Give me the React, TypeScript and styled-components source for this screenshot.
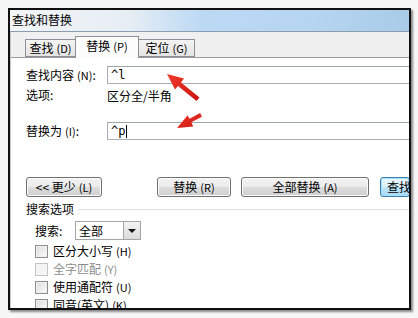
import React from "react";
import styled, { createGlobalStyle } from "styled-components";

const GlobalStyle = createGlobalStyle`
  html, body {
    margin: 0;
    padding: 0;
    background: #f7f7f7;
    font-family: "Noto Sans CJK SC", "Liberation Sans", sans-serif;
    font-size: 12px;
    color: #000;
  }
`;

const Page = styled.div`
  position: relative;
  width: 418px;
  height: 318px;
  overflow: hidden;
`;

const Dialog = styled.div`
  position: relative;
  margin: 8px 0 0 8px;
  width: 399px;
  height: 298px;
  border: 2px solid #111;
  box-shadow: 2px 2px 2px rgba(0, 0, 0, 0.45);
  background: #fff;
  overflow: hidden;
`;

const TitleBar = styled.div`
  box-sizing: border-box;
  height: 22px;
  padding: 0 0 2px 2px;
  display: flex;
  align-items: center;
  font-size: 12px;
  line-height: 14px;
  background: linear-gradient(to right, #f3f5f7 0%, #e6edf4 30%, #bcd9f4 48%, #b6d5f1 75%, #a9cbe8 100%);
  border-bottom: 1px solid #8b9db0;
`;

const Body = styled.div`
  border-left: 1px solid #c8c8c8;
  height: 100%;
`;

const TabStrip = styled.div`
  height: 26px;
  box-sizing: border-box;
  background: #f0f0f0;
  border-bottom: 1px solid #9a9a9a;
  display: flex;
  align-items: flex-end;
  padding-left: 14px;
`;

const Tab = styled.div<{ $active?: boolean; $w: number }>`
  box-sizing: border-box;
  width: ${(p) => p.$w}px;
  height: ${(p) => (p.$active ? 22 : 18)}px;
  margin-bottom: ${(p) => (p.$active ? -1 : 0)}px;
  margin-left: ${(p) => (p.$active ? -1 : 0)}px;
  margin-right: ${(p) => (p.$active ? -1 : 0)}px;
  border: 1px solid #8c8f96;
  border-bottom: ${(p) => (p.$active ? "none" : "1px solid #8c8f96")};
  background: ${(p) => (p.$active ? "#fcfcfc" : "linear-gradient(#f4f4f4, #e4e4e4)")};
  display: flex;
  align-items: center;
  justify-content: center;
  font-size: 12px;
  line-height: 14px;
  position: relative;
  z-index: ${(p) => (p.$active ? 2 : 1)};
  padding-bottom: ${(p) => (p.$active ? 3 : 0)}px;
`;

const Key = styled.span`
  font-size: 11px;
  margin-left: 3px;
`;

const Content = styled.div`
  padding: 8px 0 0 15px;
`;

const Row = styled.div<{ $mt?: number; $h?: number }>`
  display: flex;
  align-items: center;
  margin-top: ${(p) => p.$mt ?? 0}px;
  height: ${(p) => p.$h ?? 18}px;
  white-space: nowrap;
`;

const Label = styled.div<{ $w?: number; $ml?: number }>`
  width: ${(p) => p.$w ?? 81}px;
  margin-left: ${(p) => p.$ml ?? 0}px;
  flex-shrink: 0;
  line-height: 14px;
`;

const TextBox = styled.div`
  box-sizing: border-box;
  width: 320px;
  height: 18px;
  flex-shrink: 0;
  border: 1px solid #abadb3;
  border-top-color: #a0a4ab;
  padding-left: 3px;
  display: flex;
  align-items: center;
  font-family: "DejaVu Sans Mono", "Liberation Mono", monospace;
  font-size: 12px;
`;

const Caret = styled.span`
  display: inline-block;
  width: 1px;
  height: 13px;
  background: #000;
  margin-left: 1px;
`;

const Button = styled.div<{ $w: number; $ml?: number; $default?: boolean }>`
  box-sizing: border-box;
  width: ${(p) => p.$w}px;
  height: 20px;
  margin-left: ${(p) => p.$ml ?? 0}px;
  flex-shrink: 0;
  border: 1px solid ${(p) => (p.$default ? "#3c7fb1" : "#707070")};
  border-radius: 3px;
  background: ${(p) =>
    p.$default
      ? "linear-gradient(#eaf6fd 0%, #d9f0fc 50%, #bee6fd 51%, #a7d9f5 100%)"
      : "linear-gradient(#f2f2f2 0%, #ebebeb 50%, #dddddd 51%, #cfcfcf 100%)"};
  box-shadow: ${(p) => (p.$default ? "inset 0 0 0 1px #a6e0fb" : "inset 0 0 0 1px #fcfcfc")};
  display: flex;
  align-items: center;
  justify-content: ${(p) => (p.$default ? "flex-start" : "center")};
  padding-left: ${(p) => (p.$default ? 6 : 0)}px;
  line-height: 14px;
  overflow: hidden;
`;

const Heading = styled.div`
  display: flex;
  align-items: center;
  margin-top: 5px;
  height: 14px;
  line-height: 14px;
  white-space: nowrap;
  &::after {
    content: "";
    flex: 1;
    height: 1px;
    margin-left: 4px;
    background: #dde3e8;
  }
`;

const Combo = styled.div`
  box-sizing: border-box;
  width: 66px;
  height: 19px;
  border: 1px solid #a5a5a5;
  display: flex;
  align-items: stretch;
  background: #fff;
`;

const ComboText = styled.div`
  flex: 1;
  padding-left: 3px;
  display: flex;
  align-items: center;
  line-height: 14px;
`;

const ComboButton = styled.div`
  width: 16px;
  border-left: 1px solid #a5a5a5;
  background: linear-gradient(#f3f3f3, #dcdcdc);
  display: flex;
  align-items: center;
  justify-content: center;
  &::before {
    content: "";
    border-left: 4px solid transparent;
    border-right: 4px solid transparent;
    border-top: 4px solid #111;
  }
`;

const CheckList = styled.div`
  margin-top: 2px;
`;

const CheckRow = styled.div<{ $disabled?: boolean }>`
  display: flex;
  align-items: center;
  height: 18px;
  padding-left: 9px;
  color: ${(p) => (p.$disabled ? "#8d8d8d" : "#000")};
  line-height: 14px;
  white-space: nowrap;
`;

const Box = styled.div<{ $disabled?: boolean }>`
  box-sizing: border-box;
  width: 13px;
  height: 13px;
  margin-right: 5px;
  border: 1px solid ${(p) => (p.$disabled ? "#c4c4c4" : "#8e8f8f")};
  background: ${(p) =>
    p.$disabled ? "#f4f4f4" : "linear-gradient(135deg, #dcdcdc, #fbfbfb)"};
  box-shadow: inset 0 0 0 1px ${(p) => (p.$disabled ? "#f7f7f7" : "#f0f0f0")};
`;

const Overlay = styled.svg`
  position: absolute;
  left: 0;
  top: 0;
  pointer-events: none;
`;

const checks = [
  { text: "区分大小写", key: "H" },
  { text: "全字匹配", key: "Y", disabled: true },
  { text: "使用通配符", key: "U" },
  { text: "同音(英文)", key: "K" },
];

export default function App() {
  return (
    <Page>
      <GlobalStyle />
      <Dialog>
        <TitleBar>查找和替换</TitleBar>
        <Body>
          <TabStrip>
            <Tab $w={51}>
              查找<Key>(D)</Key>
            </Tab>
            <Tab $active $w={64}>
              替换<Key>(P)</Key>
            </Tab>
            <Tab $w={57}>
              定位<Key>(G)</Key>
            </Tab>
          </TabStrip>
          <Content>
            <Row>
              <Label>
                查找内容<Key>(N)</Key>:
              </Label>
              <TextBox>^l</TextBox>
            </Row>
            <Row $mt={3} $h={16}>
              <Label>选项:</Label>
              <span>区分全/半角</span>
            </Row>
            <Row $mt={19}>
              <Label>
                替换为<Key>(I)</Key>:
              </Label>
              <TextBox>
                ^p<Caret />
              </TextBox>
            </Row>
            <Row $mt={37} $h={20}>
              <Button $w={76}>
                &lt;&lt; 更少<Key>(L)</Key>
              </Button>
              <Button $w={74} $ml={55}>
                替换<Key>(R)</Key>
              </Button>
              <Button $w={128} $ml={10}>
                全部替换<Key>(A)</Key>
              </Button>
              <Button $w={30} $ml={11} $default>
                查找
              </Button>
            </Row>
            <Heading>搜索选项</Heading>
            <Row $mt={5} $h={19}>
              <Label $w={40} $ml={9}>
                搜索:
              </Label>
              <Combo>
                <ComboText>全部</ComboText>
                <ComboButton />
              </Combo>
            </Row>
            <CheckList>
              {checks.map((c) => (
                <CheckRow key={c.key} $disabled={c.disabled}>
                  <Box $disabled={c.disabled} />
                  {c.text}
                  <Key>({c.key})</Key>
                </CheckRow>
              ))}
            </CheckList>
          </Content>
        </Body>
      </Dialog>
      <Overlay width="418" height="318" viewBox="0 0 418 318">
        <defs>
          <linearGradient id="red" x1="0" y1="0" x2="1" y2="1">
            <stop offset="0" stopColor="#f23a2c" />
            <stop offset="1" stopColor="#c8140f" />
          </linearGradient>
        </defs>
        <polygon
          points="167,74 184,78.5 181,82.5 199.5,97.5 196.5,101 178,86 175,89.5"
          fill="url(#red)"
        />
        <polygon
          points="177,128 187.6,115.2 189.5,118.7 200.1,113.1 201.9,116.7 191.3,122.3 193.2,126.5"
          fill="url(#red)"
        />
      </Overlay>
    </Page>
  );
}
